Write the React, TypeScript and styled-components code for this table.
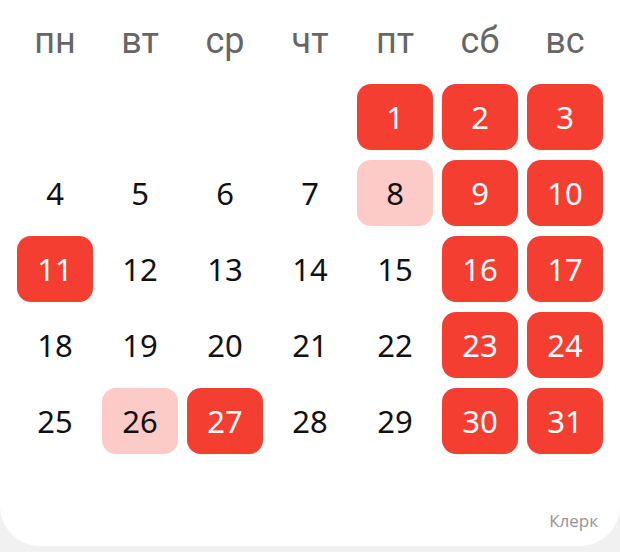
import styled, { createGlobalStyle } from "styled-components";

const GlobalStyle = createGlobalStyle`
  html, body {
    margin: 0;
    padding: 0;
    background: #f1f1f1;
  }
`;

const Card = styled.div`
  width: 620px;
  height: 546px;
  box-sizing: border-box;
  padding: 8px 17px 0;
  background: #ffffff;
  border-radius: 0 0 40px 40px;
  display: flex;
  flex-direction: column;
`;

const Grid = styled.div`
  display: grid;
  grid-template-columns: repeat(7, 76px);
  grid-auto-rows: 66px;
  column-gap: 9px;
  row-gap: 10px;
`;

const WeekDay = styled.div`
  display: flex;
  align-items: center;
  justify-content: center;
  font-family: Roboto, "Liberation Sans", sans-serif;
  font-size: 36px;
  color: #666666;
`;

type Kind = "plain" | "holiday" | "short";

const Day = styled.div<{ $kind: Kind }>`
  display: flex;
  align-items: center;
  justify-content: center;
  border-radius: 14px;
  font-family: "Noto Sans", "Open Sans", sans-serif;
  font-size: 31px;
  color: ${(p) => (p.$kind === "holiday" ? "#ffffff" : "#111111")};
  background: ${(p) =>
    p.$kind === "holiday" ? "#f43e32" : p.$kind === "short" ? "#fccbc7" : "transparent"};
`;

const Footer = styled.div`
  margin-top: auto;
  padding: 0 22px 14px 0;
  margin-right: -17px;
  text-align: right;
  font-family: "Open Sans", "Liberation Sans", sans-serif;
  font-size: 17px;
  color: #949494;
`;

const weekDays = ["пн", "вт", "ср", "чт", "пт", "сб", "вс"];
const holidays = [1, 2, 3, 9, 10, 11, 16, 17, 23, 24, 27, 30, 31];
const shortDays = [8, 26];

const kindOf = (d: number): Kind =>
  holidays.includes(d) ? "holiday" : shortDays.includes(d) ? "short" : "plain";

const App = () => (
  <>
    <GlobalStyle />
    <Card>
      <Grid>
        {weekDays.map((w) => (
          <WeekDay key={w}>{w}</WeekDay>
        ))}
        {Array.from({ length: 4 }, (_, i) => (
          <div key={`e${i}`} />
        ))}
        {Array.from({ length: 31 }, (_, i) => i + 1).map((d) => (
          <Day key={d} $kind={kindOf(d)}>
            {d}
          </Day>
        ))}
      </Grid>
      <Footer>Клерк</Footer>
    </Card>
  </>
);

export default App;
